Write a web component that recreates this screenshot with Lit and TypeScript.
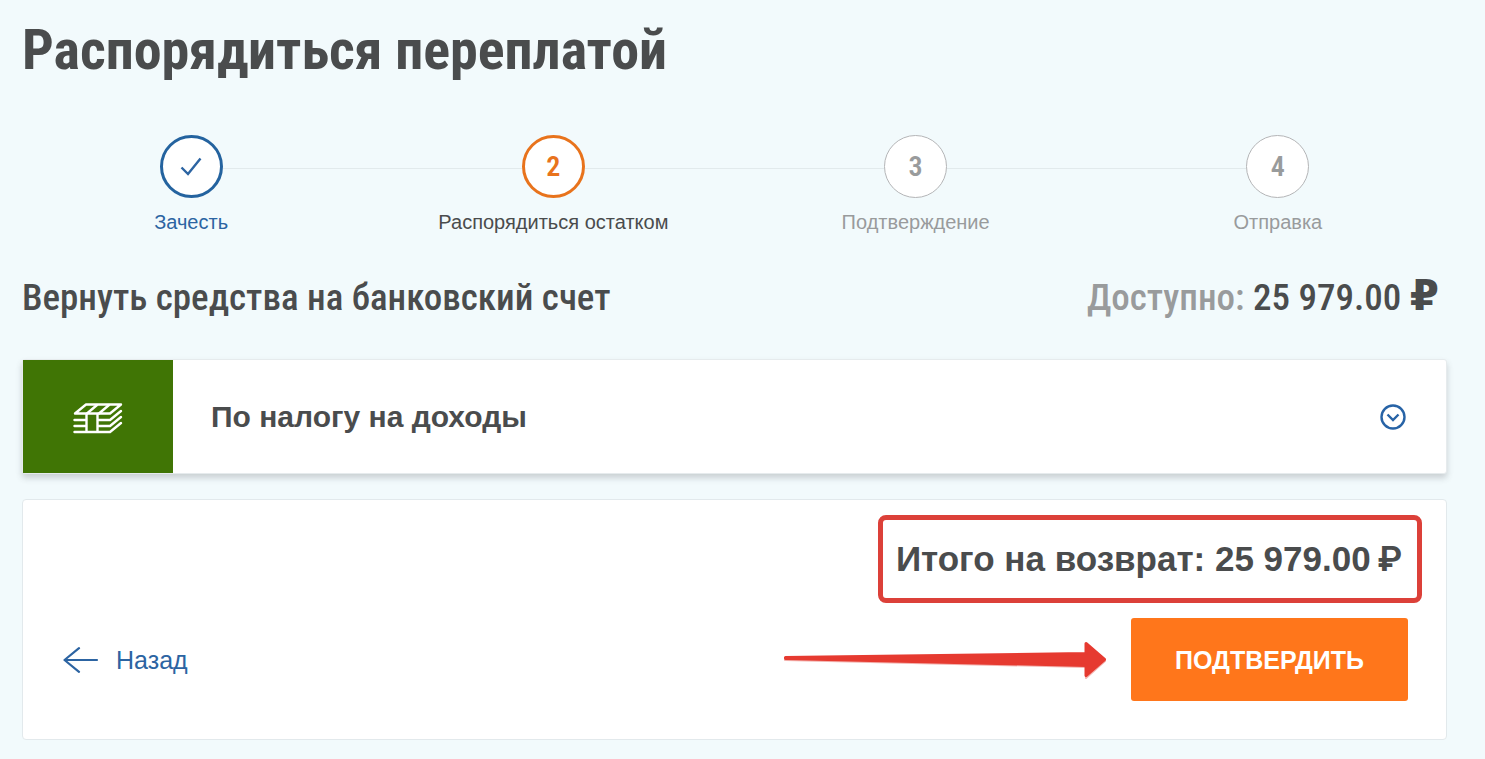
import { LitElement, html, css, svg, nothing } from "lit";
import { customElement, property, state } from "lit/decorators.js";
import { classMap } from "lit/directives/class-map.js";

type StepState = "done" | "current" | "todo";

interface Step {
  label: string;
  state: StepState;
}

@customElement("progress-steps")
class ProgressSteps extends LitElement {
  @property({ attribute: false }) steps: Step[] = [];

  static styles = css`
    :host {
      display: block;
    }
    .steps {
      display: flex;
      margin: 0;
      padding: 0;
      list-style: none;
    }
    .step {
      flex: 1 1 0;
      min-width: 0;
      display: flex;
      flex-direction: column;
      align-items: center;
      gap: 12px;
      color: #999b9c;
    }
    .row {
      align-self: stretch;
      display: flex;
      align-items: center;
    }
    .row::before,
    .row::after {
      content: "";
      flex: 1;
      height: 1px;
      margin-top: 4px;
      background: #e2eaec;
    }
    .step:first-child .row::before,
    .step:last-child .row::after {
      background: transparent;
    }
    .circle {
      box-sizing: border-box;
      width: 63px;
      height: 63px;
      display: flex;
      align-items: center;
      justify-content: center;
      border: 1px solid #b4b5b7;
      border-radius: 50%;
      background: #fff;
      font: 600 28px/32px "Roboto Condensed", "Liberation Sans Narrow", "Liberation Sans", sans-serif;
    }
    .label {
      font-size: 20px;
      line-height: 24px;
      text-align: center;
    }
    .done {
      color: #2c64a2;
    }
    .done .circle {
      border: 3px solid #24639f;
    }
    .current .circle {
      border: 3px solid #e8731c;
      color: #e8731c;
    }
    .current .label {
      color: #4a4c4d;
    }
  `;

  render() {
    return html`<ol class="steps">
      ${this.steps.map(
        (step, i) => html`<li
          class=${classMap({ step: true, [step.state]: true })}
          aria-current=${step.state === "current" ? "step" : nothing}
        >
          <div class="row">
            <span class="circle">
              ${step.state === "done"
                ? html`<svg width="24" height="24" viewBox="0 0 24 24" fill="none" stroke="currentColor" stroke-width="2.4" aria-hidden="true">
                    <path d="M2.5 12.5 9 19 21.5 3.5" />
                  </svg>`
                : i + 1}
            </span>
          </div>
          <span class="label">${step.label}</span>
        </li>`
      )}
    </ol>`;
  }
}

const moneyIcon = svg`
  <path d="M2 10.500 13 1.500H48L37 10.500Z" />
  <path d="M14 10.500 24 2M26 10.500 36 2" />
  <path d="M1.500 17H13M1.500 23H13M1.500 29H37L48 20" />
  <path d="M25 17H37L48 8M25 23H37L48 14" />
  <path d="M13.500 11V28.500M24.500 11V28.500" />
`;

@customElement("app-root")
class AppRoot extends LitElement {
  @state() private steps: Step[] = [
    { label: "Зачесть", state: "done" },
    { label: "Распорядиться остатком", state: "current" },
    { label: "Подтверждение", state: "todo" },
    { label: "Отправка", state: "todo" },
  ];

  static styles = css`
    :host {
      display: block;
      box-sizing: border-box;
      min-height: 100vh;
      padding: 10px 38px 19px 22px;
      background: #f2fafc;
      color: #4a4c4d;
      font-family: "Liberation Sans", Arial, sans-serif;
    }
    .title,
    .subtitle,
    .available {
      margin: 0;
      font-family: "Roboto Condensed", "Liberation Sans Narrow", "Liberation Sans", sans-serif;
      font-weight: 500;
    }
    .title {
      font-size: 56px;
      font-weight: 700;
      line-height: 80px;
    }
    .steps {
      margin: 45px -12px 0;
    }
    .heading {
      display: flex;
      justify-content: space-between;
      align-items: baseline;
      gap: 24px;
      margin-top: 38px;
      padding-right: 8px;
    }
    .subtitle,
    .available {
      font-size: 37px;
      line-height: 52px;
    }
    .available {
      white-space: nowrap;
    }
    .muted {
      color: #999b9c;
    }
    .ruble {
      font-family: "DejaVu Sans", sans-serif;
      font-size: 42px;
      font-weight: 700;
      line-height: 1;
    }
    .tax {
      box-sizing: border-box;
      width: 100%;
      display: flex;
      align-items: stretch;
      min-height: 115px;
      margin-top: 35px;
      padding: 0;
      border: 1px solid #e6ebed;
      border-radius: 3px;
      background: #fff;
      box-shadow: 0 4px 6px rgba(60, 60, 70, 0.22);
      color: inherit;
      font: 700 30px/36px "Liberation Sans", Arial, sans-serif;
      text-align: left;
      cursor: pointer;
    }
    .badge {
      width: 150px;
      display: flex;
      align-items: center;
      justify-content: center;
      padding-top: 4px;
      box-sizing: border-box;
      background: #407505;
      color: #fff;
    }
    .name {
      flex: 1;
      align-self: center;
      padding: 0 38px;
    }
    .toggle {
      align-self: center;
      margin-right: 40px;
      color: #2763a6;
    }
    .panel {
      display: flex;
      flex-direction: column;
      gap: 15px;
      margin-top: 25px;
      padding: 15px 24px 38px;
      border: 1px solid #e2e9ec;
      border-radius: 4px;
      background: #fff;
    }
    .total {
      align-self: flex-end;
      display: flex;
      align-items: baseline;
      gap: 7px;
      margin: 0;
      padding: 18px 15px 18px 13px;
      border: 5px solid #dc4039;
      border-radius: 8px;
      font-size: 35px;
      line-height: 42px;
      font-weight: 700;
    }
    .total .ruble {
      font: 600 35px/1 Roboto, sans-serif;
    }
    .actions {
      display: flex;
      align-items: center;
      gap: 24px;
      padding: 0 14px 0 16px;
    }
    .back {
      display: flex;
      align-items: center;
      gap: 17px;
      margin-right: auto;
      color: #2c64a2;
      font-size: 25px;
      line-height: 32px;
      text-decoration: none;
    }
    .pointer {
      flex: 0 1 324px;
      min-width: 0;
    }
    .confirm {
      min-height: 83px;
      padding: 0 44px;
      border: 0;
      border-radius: 3px;
      background: #ff761b;
      color: #fff;
      font: 700 25px/32px "Liberation Sans", Arial, sans-serif;
      cursor: pointer;
    }
  `;

  render() {
    return html`
      <h1 class="title">Распорядиться переплатой</h1>
      <progress-steps class="steps" .steps=${this.steps}></progress-steps>

      <div class="heading">
        <h2 class="subtitle">Вернуть средства на банковский счет</h2>
        <p class="available">
          <span class="muted">Доступно:</span> 25 979.00 <span class="ruble">₽</span>
        </p>
      </div>

      <button class="tax" type="button" aria-expanded="false">
        <span class="badge">
          <svg width="50" height="32" viewBox="0 0 50 32" fill="none" stroke="currentColor" stroke-width="2.400" stroke-linecap="round" stroke-linejoin="round" aria-hidden="true">
            ${moneyIcon}
          </svg>
        </span>
        <span class="name">По налогу на доходы</span>
        <svg class="toggle" width="26" height="26" viewBox="0 0 26 26" fill="none" stroke="currentColor" stroke-width="2.400" aria-hidden="true">
          <circle cx="13" cy="13" r="11.500" />
          <path d="M7.500 10.500 13 16 18.500 10.500" />
        </svg>
      </button>

      <section class="panel">
        <p class="total"><span>Итого на возврат: 25 979.00</span> <span class="ruble">₽</span></p>
        <div class="actions">
          <a class="back" href="#">
            <svg width="36" height="26" viewBox="0 0 36 26" fill="none" stroke="currentColor" stroke-width="2.200" stroke-linecap="round" stroke-linejoin="round" aria-hidden="true">
              <path d="M34 13H1.500M16 1.200 1.500 13 16 24.800" />
            </svg>
            Назад
          </a>
          <svg class="pointer" height="38" viewBox="0 0 324 38" aria-hidden="true">
            <g stroke-linejoin="round" stroke-width="3">
              <path d="M2 18 303 14V3L322 20 303 37V26L2 19Z" fill="#f3b5b1" stroke="#f3b5b1" stroke-width="2" />
              <path d="M2.500 16.500 303 12.500V2.500L321.500 18.500 303 34.500V24.500L2.500 17.500Z" fill="#e63a30" stroke="#e63a30" />
            </g>
          </svg>
          <button class="confirm" type="button">ПОДТВЕРДИТЬ</button>
        </div>
      </section>
    `;
  }
}
